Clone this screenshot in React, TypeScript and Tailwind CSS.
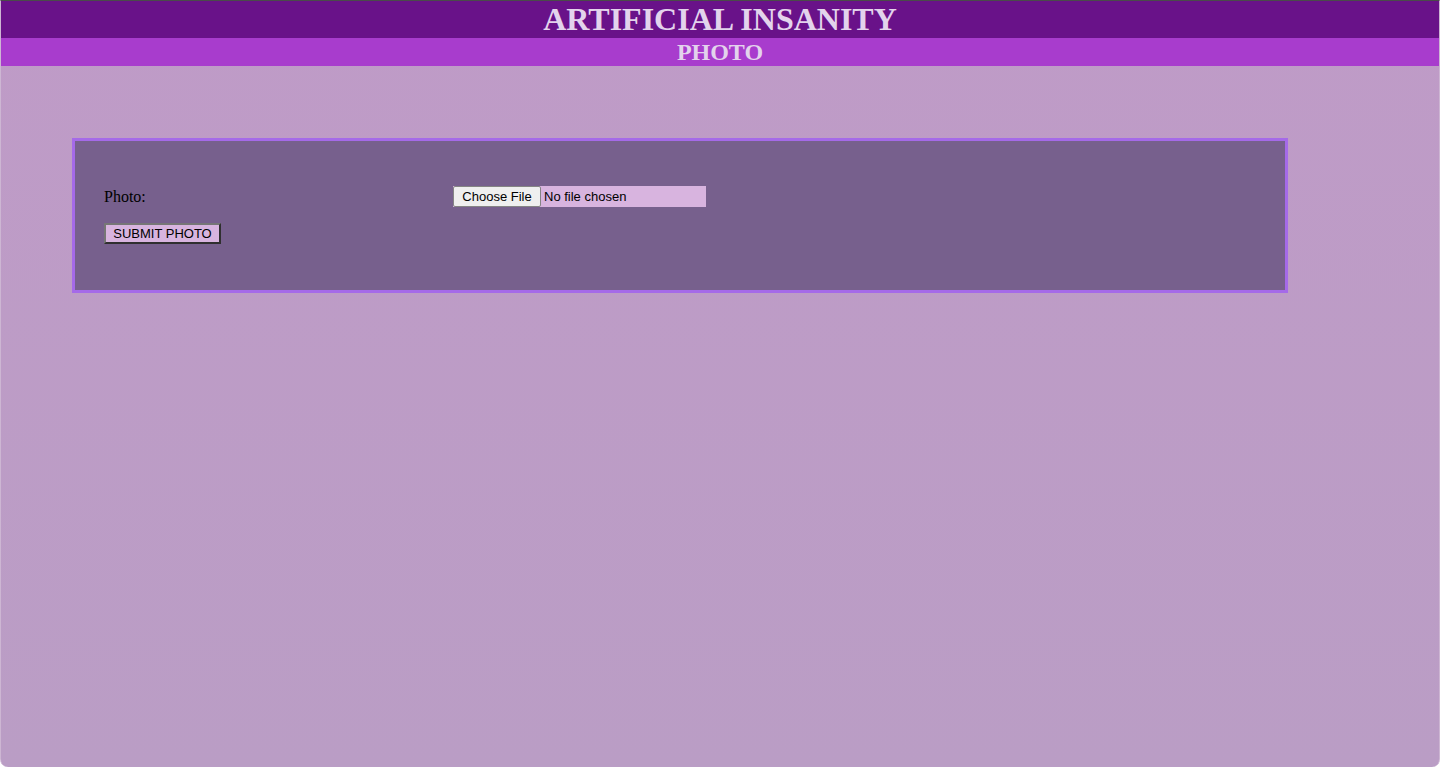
export default function App() {
  return (
    <div className="h-[767px] overflow-hidden border-t border-t-[#4a4a4a] border-x border-x-[#cdb6d3] rounded-b-[8px] bg-gradient-to-b from-[#bf9bc7] to-[#ba9dc5] font-['Liberation_Serif',serif]">
      <header>
        <h1 className="bg-[#691289] text-center text-[32px] leading-[37px] font-bold text-[#e3d3ec]">
          ARTIFICIAL INSANITY
        </h1>
        <h2 className="bg-[#a83ccd] text-center text-[24px] leading-[28px] font-bold text-[#e3d3ec]">
          PHOTO
        </h2>
      </header>

      <div className="ml-[71px] mt-[72px] w-[1216px] border-[3px] border-[#a56ae8] bg-[#77608d] px-[29px] py-[45px]">
        <div className="flex items-center h-[21px]">
          <label className="w-[349px] text-[16px] text-black">Photo:</label>
          <div className="flex h-[21px] w-[253px] items-stretch bg-[#d8b4df] font-['Liberation_Sans',Arial,sans-serif] text-[13px] text-black">
            <button className="w-[88px] rounded-[2px] border border-[#858585] bg-[#efefef] leading-[19px]">
              Choose File
            </button>
            <span className="pl-[3px] leading-[21px]">No file chosen</span>
          </div>
        </div>
        <button className="mt-[16px] h-[21px] w-[117px] border-2 border-t-[#767676] border-l-[#767676] border-b-[#2f2f2f] border-r-[#2f2f2f] bg-[#d8b4df] font-['Liberation_Sans',Arial,sans-serif] text-[13px] leading-[17px] text-black">
          SUBMIT PHOTO
        </button>
      </div>
    </div>
  );
}
